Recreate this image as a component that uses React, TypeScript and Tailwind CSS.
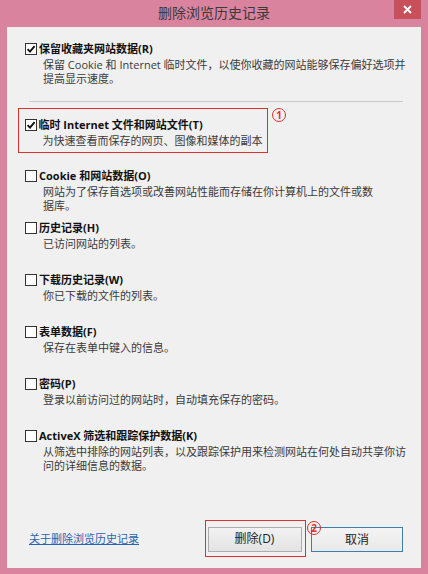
import React from "react";

const FONT = { fontFamily: '"Open Sans", "Noto Sans CJK SC", sans-serif' };

function Check({ checked }: { checked?: boolean }) {
  return (
    <div className="w-[12px] h-[12px] border border-[#333] bg-white flex items-center justify-center shrink-0">
      {checked && (
        <svg width="10" height="10" viewBox="0 0 10 10">
          <path d="M1.6 5.1 L4 7.6 L8.6 2.2" fill="none" stroke="#111" strokeWidth="1.9" />
        </svg>
      )}
    </div>
  );
}

function Item({
  checked,
  label,
  lines,
  className = "",
}: {
  checked?: boolean;
  label: string;
  lines: string[];
  className?: string;
}) {
  return (
    <div className={"flex flex-col " + className}>
      <div className="flex items-center gap-[2px] h-[16px]">
        <Check checked={checked} />
        <span className="text-[11px] font-bold text-[#111] leading-[16px] whitespace-nowrap">{label}</span>
      </div>
      <div className="pl-[18px] mt-[1px] text-[11px] leading-[14px] text-[#3a3a3a]">
        {lines.map((l, i) => (
          <div key={i} className="whitespace-nowrap">{l}</div>
        ))}
      </div>
    </div>
  );
}

function Circle({ n }: { n: string }) {
  return (
    <div className="w-[14px] h-[14px] rounded-full border-[1.5px] border-[#e0302c] flex items-center justify-center text-[10px] leading-none font-bold text-[#e0302c] bg-transparent">
      {n}
    </div>
  );
}

export default function App() {
  return (
    <div className="w-[428px] h-[574px] bg-[#d9839f] flex flex-col overflow-hidden" style={FONT}>
      <div className="relative h-[27px] flex items-center justify-center shrink-0">
        <span className="text-[14px] text-[#3a3a3a] leading-none -mt-[2px]">删除浏览历史记录</span>
        <div className="absolute right-[7px] top-0 w-[27px] h-[19px] bg-[#c8505a] flex items-center justify-center">
          <svg width="9" height="9" viewBox="0 0 9 9">
            <path d="M1 1 L8 8 M8 1 L1 8" stroke="#fff" strokeWidth="1.8" />
          </svg>
        </div>
      </div>
      <div className="mx-[7px] mb-[6px] flex-1 bg-[#f0f0f0] flex flex-col pt-[14px]">
        <Item
          checked
          className="pl-[18px]"
          label="保留收藏夹网站数据(R)"
          lines={["保留 Cookie 和 Internet 临时文件，以使你收藏的网站能够保存偏好选项并", "提高显示速度。"]}
        />
        <div className="ml-[22px] mr-[18px] mt-[15px] h-[1px] bg-[#c8c8c8]" />
        <div className="flex items-start mt-[6px] ml-[11px]">
          <div className="w-[250px] h-[45px] border-[1.5px] border-[#e0302c] pl-[5.5px] pt-[7.5px]">
            <Item checked label="临时 Internet 文件和网站文件(T)" lines={["为快速查看而保存的网页、图像和媒体的副本"]} />
          </div>
          <div className="ml-[4px]">
            <Circle n="1" />
          </div>
        </div>
        <div className="mt-[15px] pl-[18px] flex flex-col">
          <Item
            className="h-[52px]"
            label="Cookie 和网站数据(O)"
            lines={["网站为了保存首选项或改善网站性能而存储在你计算机上的文件或数", "据库。"]}
          />
          <Item className="h-[52px]" label="历史记录(H)" lines={["已访问网站的列表。"]} />
          <Item className="h-[52px]" label="下载历史记录(W)" lines={["你已下载的文件的列表。"]} />
          <Item className="h-[52px]" label="表单数据(F)" lines={["保存在表单中键入的信息。"]} />
          <Item className="h-[52px]" label="密码(P)" lines={["登录以前访问过的网站时，自动填充保存的密码。"]} />
          <Item
            className="h-[52px]"
            label="ActiveX 筛选和跟踪保护数据(K)"
            lines={["从筛选中排除的网站列表，以及跟踪保护用来检测网站在何处自动共享你访", "问的详细信息的数据。"]}
          />
        </div>
        <div className="mt-auto flex items-end pl-[22px] pr-[18px] pb-[11px]">
          <div className="flex-1 mb-[8px]">
            <span className="text-[11px] leading-[14px] text-[#2a64b0] underline">关于删除浏览历史记录</span>
          </div>
          <div className="relative w-[101px] h-[37px] border-[1.5px] border-[#e0302c] pl-[1.5px] pt-[5.5px]">
            <div className="w-[94px] h-[25px] border border-[#acacac] bg-gradient-to-b from-[#f2f2f2] to-[#e3e3e3] flex items-center justify-center text-[12px] text-[#222]">
              删除(D)
            </div>
            <div className="absolute left-[101px] top-[0px]">
              <Circle n="2" />
            </div>
          </div>
          <div className="ml-[5px] mb-[5px] w-[92px] h-[25px] border border-[#3c7fb1] bg-gradient-to-b from-[#f4f4f4] to-[#e9e9e9] flex items-center justify-center text-[12px] text-[#222]">
            取消
          </div>
        </div>
      </div>
    </div>
  );
}
